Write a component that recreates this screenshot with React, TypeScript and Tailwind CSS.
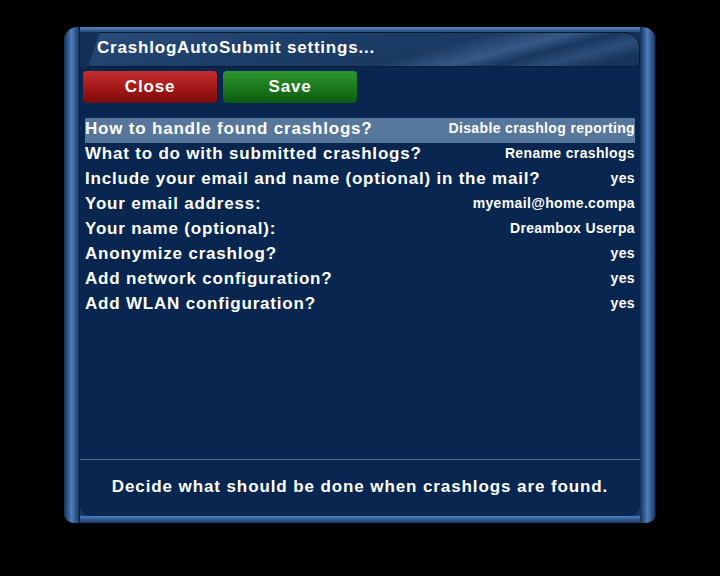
import React from 'react';

const rows: { label: string; value: string }[] = [
  { label: 'How to handle found crashlogs?', value: 'Disable crashlog reporting' },
  { label: 'What to do with submitted crashlogs?', value: 'Rename crashlogs' },
  { label: 'Include your email and name (optional) in the mail?', value: 'yes' },
  { label: 'Your email address:', value: 'myemail@home.compa' },
  { label: 'Your name (optional):', value: 'Dreambox Userpa' },
  { label: 'Anonymize crashlog?', value: 'yes' },
  { label: 'Add network configuration?', value: 'yes' },
  { label: 'Add WLAN configuration?', value: 'yes' },
];

function SideBar() {
  return (
    <div className="w-[16px] shrink-0 bg-gradient-to-r from-[#14305a] via-[#4f7fbb] to-[#1a3864] border-r border-[#06152b]" />
  );
}

export default function App() {
  return (
    <div className="w-[720px] h-[576px] bg-black pt-[27px] pl-[64px] font-['Liberation_Sans',Arial,sans-serif] text-white">
      <div className="w-[592px] h-[496px] flex rounded-t-[14px] rounded-b-[10px] overflow-hidden bg-[#1b3a66]">
        <SideBar />

        <div className="flex-1 flex flex-col">
          {/* top frame rail */}
          <div className="h-[5px] bg-gradient-to-b from-[#5a88c2] to-[#24477a]" />

          {/* title tab */}
          <div className="h-[35px] bg-[#122f57] flex">
            <div className="flex-1 ml-[8px] rounded-tr-[16px] border border-[#071a33] bg-[linear-gradient(170deg,#2a4c7b_0%,#1c3d67_40%,#1a3a63_60%,#15335b_100%)] [clip-path:polygon(12px_0,100%_0,100%_100%,0_100%)] flex items-center pl-[8px] pb-[4px] relative overflow-hidden">
              <div className="absolute right-0 top-0 h-full w-[260px] bg-[linear-gradient(165deg,transparent_30%,rgba(110,150,200,0.35)_50%,transparent_62%,rgba(110,150,200,0.25)_75%,transparent_88%)]" />
              <span className="relative text-[17px] font-bold tracking-[0.8px]">CrashlogAutoSubmit settings...</span>
            </div>
          </div>

          {/* content */}
          <div className="flex-1 bg-[#082650] rounded-b-[10px] flex flex-col">
            <div className="flex gap-[6px] pl-[3px] pt-[4px]">
              <div className="w-[134px] h-[32px] rounded-[4px] bg-gradient-to-b from-[#c43030] via-[#a51818] to-[#7e0c0c] flex items-center justify-center text-[17px] font-bold tracking-[0.8px]">
                Close
              </div>
              <div className="w-[134px] h-[32px] rounded-[4px] bg-gradient-to-b from-[#2e9630] via-[#1a7a1c] to-[#0d5a10] flex items-center justify-center text-[17px] font-bold tracking-[0.8px]">
                Save
              </div>
            </div>

            <div className="mt-[15px] h-[341px] px-[5px]">
              {rows.map((r, i) => (
                <div
                  key={r.label}
                  className={`h-[25px] flex items-center justify-between pb-[4px] ${i === 0 ? 'bg-[#57769c]' : ''}`}
                >
                  <span className="text-[17px] font-bold tracking-[0.8px]">{r.label}</span>
                  <span className="text-[14px] font-bold tracking-[0.35px]">{r.value}</span>
                </div>
              ))}
            </div>

            <div className="h-px bg-[#54728f]" />
            <div className="flex-1 flex items-center justify-center pb-[2px]">
              <span className="text-[17px] font-bold tracking-[0.9px]">Decide what should be done when crashlogs are found.</span>
            </div>
          </div>

          {/* bottom frame rail */}
          <div className="h-[7px] bg-gradient-to-b from-[#4f7fbb] to-[#1a3864]" />
        </div>

        <SideBar />
      </div>
    </div>
  );
}
